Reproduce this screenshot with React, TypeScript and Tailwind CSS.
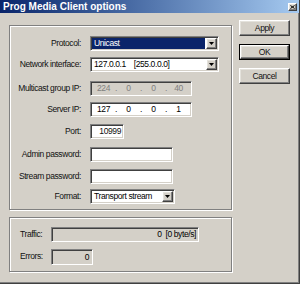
import type { ReactNode } from 'react';

const sunken =
  'border border-t-[#808080] border-l-[#808080] border-b-white border-r-white shadow-[inset_1px_1px_0_#404040,inset_-1px_-1px_0_#d4d0c8]';
const raised =
  'border border-t-white border-l-white border-b-[#404040] border-r-[#404040] shadow-[inset_-1px_-1px_0_#808080,inset_1px_1px_0_#e4e2dc]';
const etched = 'border border-[#808080] shadow-[inset_1px_1px_0_#fff,1px_1px_0_#fff]';

const DropButton = () => (
  <div className={`w-[11px] h-full bg-[#d4d0c8] flex items-center justify-center ${raised}`}>
    <svg width="5" height="3" viewBox="0 0 5 3">
      <path d="M0 0h5L2.5 3z" fill="#000" />
    </svg>
  </div>
);

const Combo = ({ width, children, selected }: { width: string; children: ReactNode; selected?: boolean }) => (
  <div className={`${width} h-[15px] bg-white flex ${sunken} p-[1px]`}>
    <div
      className={`flex-1 flex items-center pl-[2px] mr-[1px] ${selected ? 'bg-[#0a246a] text-white' : 'text-black'}`}
    >
      {children}
    </div>
    <DropButton />
  </div>
);

const Row = ({ label, mt, children }: { label: string; mt: string; children: ReactNode }) => (
  <div className={`flex items-center h-[15px] ${mt}`}>
    <div className="w-[71px] text-right">{label}</div>
    <div className="ml-[9px]">{children}</div>
  </div>
);

const IpField = ({ parts, disabled }: { parts: string[]; disabled?: boolean }) => (
  <div
    className={`w-[102px] h-[15px] flex items-center pl-[4px] ${sunken} ${
      disabled ? 'bg-[#d4d0c8] text-[#808080]' : 'bg-white text-black'
    }`}
  >
    {parts.map((p, i) => (
      <div key={i} className="flex">
        <span className="w-[17px] text-center">{p}</span>
        {i < 3 && <span className="w-[8px] text-center">.</span>}
      </div>
    ))}
  </div>
);

const Button = ({ label, isDefault }: { label: string; isDefault?: boolean }) =>
  isDefault ? (
    <div className="w-[51px] h-[16px] border border-black">
      <div className={`w-full h-full bg-[#d4d0c8] flex items-center justify-center ${raised}`}>{label}</div>
    </div>
  ) : (
    <div className={`w-[51px] h-[16px] bg-[#d4d0c8] flex items-center justify-center ${raised}`}>{label}</div>
  );

export default function App() {
  return (
    <div
      className="w-[300px] h-[284px] bg-[#d4d0c8] flex flex-col text-[8.5px] tracking-[-0.4px] text-[#111] overflow-hidden border-r border-b border-r-[#404040] border-b-[#404040] shadow-[inset_-1px_-1px_0_#808080]"
      style={{ fontFamily: '"Liberation Sans", Arial, sans-serif' }}
    >
      <div className="h-[13px] flex items-center bg-gradient-to-r from-[#0a246a] to-[#a6caf0] pl-[3px] pr-[2px]">
        <span className="text-white font-bold text-[10px] tracking-normal flex-1 leading-none">
          Prog Media Client options
        </span>
        <div className={`w-[9px] h-[8px] bg-[#d4d0c8] flex items-center justify-center ${raised}`}>
          <svg width="5" height="4" viewBox="0 0 5 4">
            <path d="M0.5 0.5L4.5 3.5M4.5 0.5L0.5 3.5" stroke="#000" strokeWidth="1" />
          </svg>
        </div>
      </div>

      <div className="flex flex-1">
        <div className="pl-[9px] pt-[12px] flex flex-col">
          <div className={`w-[223px] h-[185px] flex flex-col pt-[10px] ${etched}`}>
            <Row label="Protocol:" mt="mt-0">
              <Combo width="w-[129px]" selected>
                Unicast
              </Combo>
            </Row>
            <Row label="Network interface:" mt="mt-[6px]">
              <Combo width="w-[129px]">
                <span className="whitespace-pre">127.0.0.1    [255.0.0.0]</span>
              </Combo>
            </Row>
            <Row label="Multicast group IP:" mt="mt-[9px]">
              <IpField parts={['224', '0', '0', '40']} disabled />
            </Row>
            <Row label="Server IP:" mt="mt-[6px]">
              <IpField parts={['127', '0', '0', '1']} />
            </Row>
            <Row label="Port:" mt="mt-[7px]">
              <div className={`w-[34px] h-[15px] bg-white flex items-center justify-end pr-[2px] ${sunken}`}>
                10999
              </div>
            </Row>
            <Row label="Admin password:" mt="mt-[8px]">
              <div className={`w-[83px] h-[15px] bg-white ${sunken}`} />
            </Row>
            <Row label="Stream password:" mt="mt-[7px]">
              <div className={`w-[83px] h-[15px] bg-white ${sunken}`} />
            </Row>
            <Row label="Format:" mt="mt-[5px]">
              <Combo width="w-[85px]">Transport stream</Combo>
            </Row>
          </div>

          <div className={`w-[223px] h-[55px] mt-[7px] flex flex-col pl-[10px] pt-[9px] ${etched}`}>
            <div className="flex items-start">
              <div className="w-[31px] pt-[1px]">Traffic:</div>
              <div
                className={`w-[148px] h-[15px] flex items-center justify-end pr-[2px] whitespace-pre text-black ${sunken}`}
              >
                0  [0 byte/s]
              </div>
            </div>
            <div className="flex items-start mt-[7px]">
              <div className="w-[31px] pt-[1px]">Errors:</div>
              <div className={`w-[42px] h-[16px] flex items-center justify-end pr-[3px] text-black ${sunken}`}>
                0
              </div>
            </div>
          </div>
        </div>

        <div className="ml-[7px] pt-[7px] flex flex-col gap-[8px]">
          <Button label="Apply" />
          <Button label="OK" isDefault />
          <Button label="Cancel" />
        </div>
      </div>
    </div>
  );
}
